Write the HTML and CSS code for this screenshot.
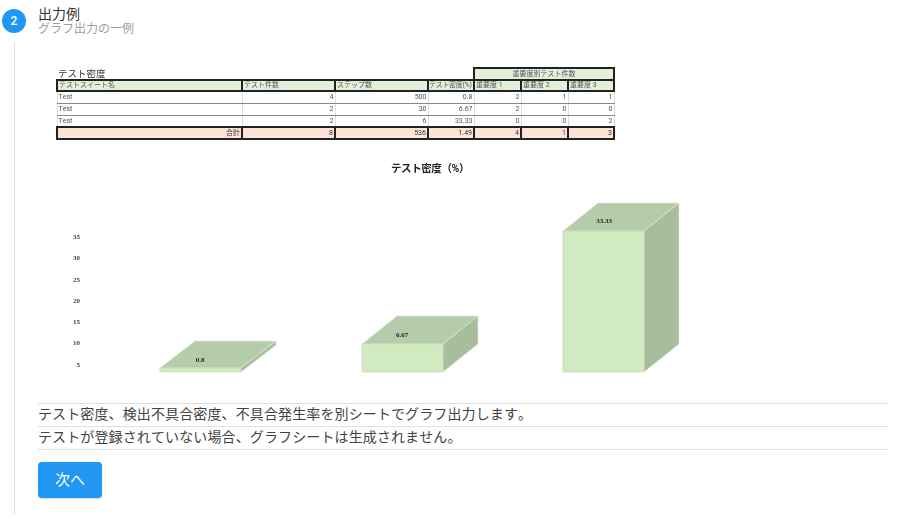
FILE: index.html
```html
<!DOCTYPE html>
<html lang="ja">
  <head>
    <meta charset="UTF-8" />
    <meta name="viewport" content="width=device-width, initial-scale=1.0" />
    <title>出力例</title>
    <link rel="stylesheet" href="styles.css">
  </head>
  <body>
    <div class="step">
      <div class="step-header">
        <span class="step-number">2</span>
        <div class="step-label">
          <div class="step-title">出力例</div>
          <div class="step-subtitle">グラフ出力の一例</div>
        </div>
      </div>
      <div class="step-content">
        <div class="sheet">
          <table class="sheet-table">
            <colgroup>
              <col class="col-name" />
              <col class="col-num" />
              <col class="col-num" />
              <col class="col-density" />
              <col class="col-sev" />
              <col class="col-sev" />
              <col class="col-last" />
            </colgroup>
            <tr class="row-top">
              <td class="sheet-title" colspan="4">テスト密度</td>
              <td class="head center" colspan="3">重要度別テスト件数</td>
            </tr>
            <tr class="row-head">
              <td class="head">テストスイート名</td>
              <td class="head">テスト件数</td>
              <td class="head">ステップ数</td>
              <td class="head tight">テスト密度(%)</td>
              <td class="head">重要度 1</td>
              <td class="head">重要度 2</td>
              <td class="head">重要度 3</td>
            </tr>
            <tr class="row-data">
              <td>Test</td><td>4</td><td>500</td><td>0.8</td><td>2</td><td>1</td><td>1</td>
            </tr>
            <tr class="row-data">
              <td>Test</td><td>2</td><td>30</td><td>6.67</td><td>2</td><td>0</td><td>0</td>
            </tr>
            <tr class="row-data">
              <td>Test</td><td>2</td><td>6</td><td>33.33</td><td>0</td><td>0</td><td>2</td>
            </tr>
            <tr class="row-total">
              <td>合計</td><td>8</td><td>536</td><td>1.49</td><td>4</td><td>1</td><td>3</td>
            </tr>
          </table>

          <svg class="chart" width="851" height="250" viewBox="38 145 851 250">
            <text class="chart-title" x="430" y="172" text-anchor="middle">テスト密度（%）</text>

            <g class="axis" text-anchor="end">
              <text x="80" y="239">35</text>
              <text x="80" y="260">30</text>
              <text x="80" y="282">25</text>
              <text x="80" y="303">20</text>
              <text x="80" y="324">15</text>
              <text x="80" y="345">10</text>
              <text x="80" y="367">5</text>
            </g>

            <g class="bar">
              <polygon class="bar-top" points="160,368 195,341 276,341 241,368" />
              <polygon class="bar-side" points="241,368 276,341 276,345 241,372" />
              <rect class="bar-front" x="160" y="368" width="81" height="4" />
            </g>
            <g class="bar">
              <polygon class="bar-top" points="362,344 397,316 478,316 443,344" />
              <polygon class="bar-side" points="443,344 478,316 478,344 443,372" />
              <rect class="bar-front" x="362" y="344" width="81" height="28" />
            </g>
            <g class="bar">
              <polygon class="bar-top" points="563,231 598,203 679,203 644,231" />
              <polygon class="bar-side" points="644,231 679,203 679,344 644,372" />
              <rect class="bar-front" x="563" y="231" width="81" height="141" />
            </g>

            <g class="bar-value" text-anchor="middle">
              <text x="200" y="362">0.8</text>
              <text x="402" y="337">6.67</text>
              <text x="604" y="223">33.33</text>
            </g>
          </svg>
        </div>

        <ul class="notes">
          <li>テスト密度、検出不具合密度、不具合発生率を別シートでグラフ出力します。</li>
          <li>テストが登録されていない場合、グラフシートは生成されません。</li>
        </ul>

        <button class="next-button">次へ</button>
      </div>
    </div>
  </body>
</html>
```

FILE: styles.css
```css
body {
  margin: 0;
  background-color: #ffffff;
  color: #333333;
  font-family: Roboto, 'Noto Sans CJK JP', sans-serif;
  font-kerning: none;
}
.step {
  padding: 6px 12px 0 2px;
}
.step-header {
  display: flex;
  align-items: center;
  gap: 12px;
}
.step-number {
  width: 24px;
  height: 24px;
  border-radius: 50%;
  background-color: #2196f3;
  color: #ffffff;
  font-size: 12px;
  font-weight: 500;
  line-height: 24px;
  text-align: center;
}
.step-label {
  height: 30px;
}
.step-title {
  padding-top: 1px;
  font-size: 14px;
  line-height: 15px;
  color: #333333;
}
.step-subtitle {
  font-size: 12px;
  line-height: 14px;
  color: #9e9e9e;
}
.step-content {
  margin: 6px 0 0 12px;
  padding: 0 0 16px 23px;
  border-left: 1px solid #e0e0e0;
  height: 472px;
  box-sizing: border-box;
}
.sheet {
  padding: 25px 0 0 18px;
  filter: blur(0.5px);
}
.sheet-table {
  width: 556px;
  table-layout: fixed;
  border-collapse: collapse;
  font-size: 7px;
  color: #555555;
}
.col-name { width: 185px; }
.col-num { width: 93px; }
.col-density { width: 46px; }
.col-sev { width: 47px; }
.col-last { width: 46px; }
.sheet-table tr {
  height: 12px;
}
.sheet-table td {
  height: 12px;
  padding: 0 1px;
  line-height: 10px;
  box-sizing: border-box;
  overflow: hidden;
  white-space: nowrap;
  text-align: right;
}
.sheet-table .row-head {
  height: 11px;
}
.sheet-table .row-head td {
  height: 11px;
  line-height: 9px;
}
.sheet-table .sheet-title {
  padding: 0 1px;
  font-size: 9.5px;
  color: #333333;
  text-align: left;
  vertical-align: bottom;
  line-height: 10px;
}
.sheet-table .head {
  border: 2px solid #222222;
  background-color: #e2efda;
  text-align: left;
}
.sheet-table .center {
  text-align: center;
}
.sheet-table .tight {
  padding: 0;
  letter-spacing: -0.3px;
}
.row-data td {
  border: 1px solid #dddddd;
  border-bottom: 1px solid #888888;
}
.row-data td:first-child {
  text-align: left;
}
.row-total td {
  border: 2px solid #222222;
  background-color: #fce4d6;
  color: #333333;
}
.chart {
  display: block;
  margin: 5px 0 0 -18px;
}
.chart-title {
  font-size: 10.5px;
  font-weight: 700;
  letter-spacing: -0.4px;
  fill: #222222;
}
.axis text {
  font-family: 'Liberation Serif', serif;
  font-size: 7px;
  font-weight: 700;
  fill: #444444;
}
.bar-top {
  fill: #b5ccaa;
  stroke: #e0e8da;
  stroke-width: 0.7;
}
.bar-side {
  fill: #a8bd9b;
  stroke: #e0e8da;
  stroke-width: 0.7;
}
.bar-front {
  fill: #d1ebc0;
  stroke: #c5d6ba;
  stroke-width: 0.7;
}
.bar-value text {
  font-family: 'Liberation Serif', serif;
  font-size: 7px;
  font-weight: 700;
  fill: #222222;
}
.notes {
  list-style: none;
  margin: 8px 0 0;
  padding: 0;
  width: 851px;
  border-top: 1px solid #e0e0e0;
}
.notes li {
  height: 22px;
  border-bottom: 1px solid #e0e0e0;
  font-size: 14px;
  line-height: 21px;
  letter-spacing: 0.12px;
  color: #424242;
}
.next-button {
  display: block;
  width: 64px;
  height: 36px;
  margin-top: 12px;
  padding: 0 0 3px;
  border: none;
  border-radius: 4px;
  background-color: #2196f3;
  color: #ffffff;
  font-family: inherit;
  font-size: 15px;
  box-shadow: 0 1px 2px rgba(0, 0, 0, 0.15);
}
```
